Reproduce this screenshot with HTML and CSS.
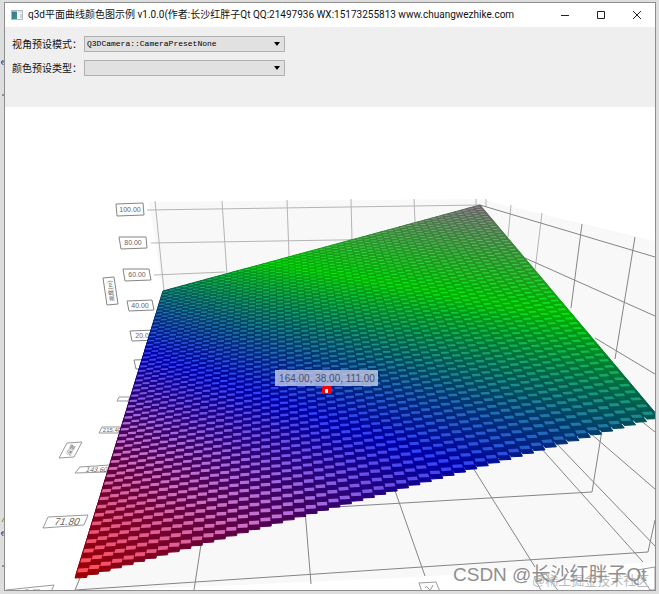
FILE: index.html
```
<!DOCTYPE html>
<html lang="zh-CN">
<head>
<meta charset="utf-8">
<meta name="viewport" content="width=device-width, initial-scale=1">
<title>q3d平面曲线颜色图示例</title>
<link rel="stylesheet" href="styles.css">
</head>
<body>
<div class="desktop">
  <svg class="behind" viewBox="0 0 4 594" aria-hidden="true">
    <path d="M1 62h3M3.500 60.500a2 2 0 1 0 0 4M1 533h3M3.500 531.500a2 2 0 1 0 0 4" stroke="#3a4a9c"/>
    <path d="M2 95h2M2 566h2" stroke="#444"/>
    <path d="M2 522l2-4" stroke="#8a8a30"/>
  </svg>
  <main class="window">
    <header class="titlebar">
      <svg class="app-icon" viewBox="0 0 12 10" aria-hidden="true">
        <defs><linearGradient id="pane" x1="0" y1="0" x2="1" y2="1"><stop offset="0" stop-color="#3b6fa0"/><stop offset="1" stop-color="#3d9c7c"/></linearGradient></defs>
        <rect x=".5" y=".5" width="11" height="9" fill="#f7f7f7" stroke="#b4b8bc"/>
        <rect x="1" y="1.500" width="5" height="7.500" fill="url(#pane)"/>
        <path d="M7 1.500h4v1H7zM9 4h2v4H9z" fill="#cfd5da"/>
      </svg>
      <h1 class="title">q3d平面曲线颜色图示例 v1.0.0(作者:长沙红胖子Qt QQ:21497936 WX:15173255813 www.chuangwezhike.com</h1>
      <div class="controls">
        <button class="control" type="button" aria-label="最小化"><svg viewBox="0 0 10 10"><path d="M1 5.500h8"/></svg></button>
        <button class="control" type="button" aria-label="最大化"><svg viewBox="0 0 10 10"><path d="M1.500 1.500h7v7h-7z"/></svg></button>
        <button class="control" type="button" aria-label="关闭"><svg viewBox="0 0 10 10"><path d="M1 1l8 8M9 1L1 9"/></svg></button>
      </div>
    </header>
    <form class="options">
      <label class="option-label" for="camera">视角预设模式：</label>
      <span class="combo"><select id="camera"><option>Q3DCamera::CameraPresetNone</option></select></span>
      <label class="option-label" for="palette">颜色预设类型：</label>
      <span class="combo"><select id="palette"><option></option></select></span>
    </form>
    <svg class="chart" viewBox="5 107 650 483" role="img" aria-label="q3d">
      <path class="wall" d="M149 202L478 199L655 241V562L400 578L78 592L75 578L163 291Z"/>
      <path class="grid far" d="M147 210L480 205M151 243L400 239M154 275L225 272M155 201L164 291M222 201L227 275M287 200L289 256M351 199L352 240M414 199L415 222M476 199V206M486 199V207M511 205L508 237M542 213L535 270"/>
      <path class="grid" d="M480 205L655 257M525 258L655 316M595 338L655 374M582 224L571 308M635 237L615 359M640 420L655 432M590 433L655 489M555 442L655 546M540 447L643 562M602 430L592 492L335 507M470 463L535 567M655 520L648 552L75 590M305 510L311 584M393 485L425 576M80 578L75 590M202 538L194 590"/>
      <g class="tick">
        <path d="M116 204L143 203L144 215L117 216Z"/><text x="130" y="212">100.00</text>
        <path d="M119 237L146 237L147 248L121 249Z"/><text x="133" y="245">80.00</text>
        <path d="M123 269L149 269L151 280L125 281Z"/><text x="137" y="277">60.00</text>
        <path d="M127 301L152 300L154 310L129 311Z"/><text x="140" y="308">40.00</text>
        <path d="M130 331L155 330L157 340L132 341Z"/><text x="144" y="338">20.00</text>
        <path d="M134 360L160 359L160 368L136 369Z"/><text x="150" y="367">0.00</text>
        <path d="M103 278L114 277L118 304L107 305Z"/>
        <text class="small" transform="translate(111 291) rotate(-98)" y="2">高度(m)</text>
      </g>
      <g class="tick floor-tick">
        <path d="M119 397H130L128 401H117Z"/>
        <path d="M102 427H122L118 433H99Z"/><text class="small" x="112" y="432">215.40</text>
        <path d="M80 467L110 465L108 472L75 473Z"/><text transform="translate(96 472) skewX(-20)">143.60</text>
        <path d="M67 443L82 442L74 457L59 458Z"/>
        <text class="small" transform="translate(71 450) rotate(-62)" y="2">深度</text>
        <path d="M48 517L88 515L84 525L43 528Z"/><text class="near" transform="translate(66 525) skewX(-20)">71.80</text>
        <path d="M6 590L54 585L50 594L4 596Z"/><path d="M25 590h4M33 590h7"/>
        <path d="M419 583L436 582L441 594L423 595Z"/><path class="digit" d="M425 588q1-3 3 0t3 1l2-4"/>
        <path d="M534 577L546 574L562 596L544 596Z"/><path d="M637 570L655 567V590H650Z"/>
      </g>
      <g id="surface"></g>
      <rect class="marker" x="322" y="386" width="10" height="8" rx="2"/>
      <rect class="marker-dot" x="325" y="389" width="3" height="4" rx="1"/>
      <rect class="callout" x="275" y="370" width="103" height="16"/>
      <text class="callout-text" x="327" y="382">164.00, 38.00, 111.00</text>
      <text class="watermark faint" x="532" y="585">@稀土掘金技术社区</text>
      <text class="watermark" x="453" y="581">CSDN @长沙红胖子Qt</text>
    </svg>
  </main>
</div>
<script src="surface.js"></script>
</body>
</html>
```
FILE: styles.css
```
* { box-sizing: border-box; }
body {
  margin: 0;
  background: #dedede;
  color: #111;
  font-family: "Noto Sans CJK SC", sans-serif;
}
.desktop {
  position: relative;
  min-height: 100vh;
  padding: 2px 3px 3px 4px;
}
.behind {
  position: absolute;
  top: 0;
  left: 0;
  width: 4px;
  height: 594px;
  fill: none;
}
.window {
  overflow: hidden;
  border: 1px solid #8d8d8d;
  background: #fff;
}
.titlebar {
  display: flex;
  align-items: center;
  height: 24px;
  padding-left: 6px;
}
.app-icon {
  flex: none;
  width: 12px;
  height: 10px;
  margin-right: 5px;
}
.title {
  flex: 1;
  margin: 0;
  font-family: Roboto, "Noto Sans CJK SC", sans-serif;
  font-size: 10px;
  font-weight: 400;
  line-height: 16px;
  white-space: nowrap;
}
.controls { display: flex; }
.control {
  display: grid;
  place-items: center;
  width: 36px;
  height: 24px;
  padding: 0;
  border: 0;
  background: none;
}
.control svg {
  width: 10px;
  height: 10px;
  fill: none;
  stroke: #222;
}
.options {
  display: grid;
  grid-template-columns: 72px 201px;
  grid-auto-rows: 16px;
  align-content: start;
  align-items: center;
  row-gap: 8px;
  height: 80px;
  padding: 9px 7px;
  background: #efefef;
}
.option-label {
  font-size: 10px;
  line-height: 16px;
  white-space: nowrap;
}
.combo {
  position: relative;
  display: block;
  height: 16px;
}
.combo::after {
  content: "";
  position: absolute;
  top: 6px;
  right: 5px;
  border: 3px solid transparent;
  border-top: 4px solid #000;
  border-bottom: 0;
  pointer-events: none;
}
.combo select {
  display: block;
  width: 100%;
  height: 16px;
  padding: 0 2px;
  appearance: none;
  border: 1px solid #b0b0b0;
  border-radius: 0;
  background: #e1e1e1;
  color: #000;
  font: 8px/14px "Liberation Mono", monospace;
}
.chart {
  display: block;
  width: 100%;
  height: auto;
}
.wall { fill: #f8f8f8; }
.grid {
  fill: none;
  stroke: #858585;
}
.grid.far { stroke: #b4b4b4; }
.tick path {
  fill: #fff;
  stroke: #858585;
}
.tick .digit { fill: none; }
.tick text {
  fill: #666;
  font: 7px "Liberation Sans", "Noto Sans CJK SC", sans-serif;
  text-anchor: middle;
}
.tick .small { font-size: 6px; }
.tick .near { font-size: 10px; }
.floor-tick path { stroke: #999; }
.marker { fill: #f00; }
.marker-dot { fill: #fff; }
.callout {
  fill: #c6cde8;
  fill-opacity: .8;
}
.callout-text {
  fill: #4c5268;
  font: 10px "Liberation Sans", sans-serif;
  text-anchor: middle;
}
.watermark {
  fill: #8f8f8f;
  font: 19px "Liberation Sans", "Noto Sans CJK SC", sans-serif;
}
.watermark.faint {
  fill: #bbb;
  font-size: 13px;
}
```
FILE: surface.js
```
// Corners of the sampled plane: near, right, far, left.
const corners = [[75, 578], [658, 416], [480, 205], [163, 291]];
const cells = 51;
const stops = [[195, 0, 0], [0, 0, 195], [0, 205, 0], [135, 120, 130]];
const lift = [[60, 75, 85], [45, 60, 45], [10, 20, 30], [15, 20, 20]];
const dim = [0.82, 0.84, 0.86, 0.8];

// Perspective map from the unit square to the corners.
const [a, b, c, d] = corners;
const dx1 = b[0] - c[0], dx2 = d[0] - c[0], sx = a[0] - b[0] + c[0] - d[0];
const dy1 = b[1] - c[1], dy2 = d[1] - c[1], sy = a[1] - b[1] + c[1] - d[1];
const det = dx1 * dy2 - dx2 * dy1;
const g = (sx * dy2 - dx2 * sy) / det;
const h = (dx1 * sy - sx * dy1) / det;
function project(u, v) {
  const w = g * u + h * v + 1;
  return [
    ((b[0] - a[0] + g * b[0]) * u + (d[0] - a[0] + h * d[0]) * v + a[0]) / w,
    ((b[1] - a[1] + g * b[1]) * u + (d[1] - a[1] + h * d[1]) * v + a[1]) / w
  ];
}

const mix = (p, q, f) => p + (q - p) * f;
const css = rgb => "rgb(" + rgb.map(n => Math.min(255, Math.round(n))) + ")";

// Face and top colours of a cell at height t (0 to 2).
function shade(t) {
  const k = Math.min(2.999, t / 2 * 3);
  const i = Math.floor(k), f = k - i;
  const rgb = stops[i].map((n, j) => mix(n, stops[i + 1][j], f));
  const shine = 45 * Math.exp(-(((t - 0.35) / 0.22) ** 2));
  return {
    dark: css(rgb.map(n => n * mix(dim[i], dim[i + 1], f))),
    light: css(rgb.map((n, j) => n + mix(lift[i][j], lift[i + 1][j], f) + shine))
  };
}

// One facet of a cell between two depths; rise 0 is a level edge, 1 follows the plane.
function facet(u, v0, v1, step, rise) {
  const p = project(u, v0), q = project(u + step, v0);
  const r = project(u, v1), s = project(u + step, v1);
  const points = [p, [q[0], p[1] + (q[1] - p[1]) * rise], [s[0], r[1] + (s[1] - r[1]) * rise], r];
  return points.map(n => n[0].toFixed(1) + "," + n[1].toFixed(1)).join(" ");
}

const step = 1 / cells;
let base = "", faces = "", tops = "";
for (let j = cells - 1; j >= 0; j--) {
  for (let i = cells - 1; i >= 0; i--) {
    const u = i * step, v = j * step;
    const { dark, light } = shade(u + v + step);
    const paint = `fill="${dark}" stroke="${dark}"`;
    // The front row starts deeper, which keeps the stepped outline.
    const front = j > 0 ? v : step * 0.3;
    base += `<polygon points="${facet(u, front, v + step, step, 1)}" ${paint}/>`;
    faces += `<polygon points="${facet(u, v, v + step, step, 0.2)}" ${paint}/>`;
    tops += `<polygon points="${facet(u + step * 0.05, v + step * 0.52, v + step * 0.92, step * 0.88, 0.2)}" fill="${light}"/>`;
  }
}
document.getElementById("surface").innerHTML = base + faces + tops;
```
